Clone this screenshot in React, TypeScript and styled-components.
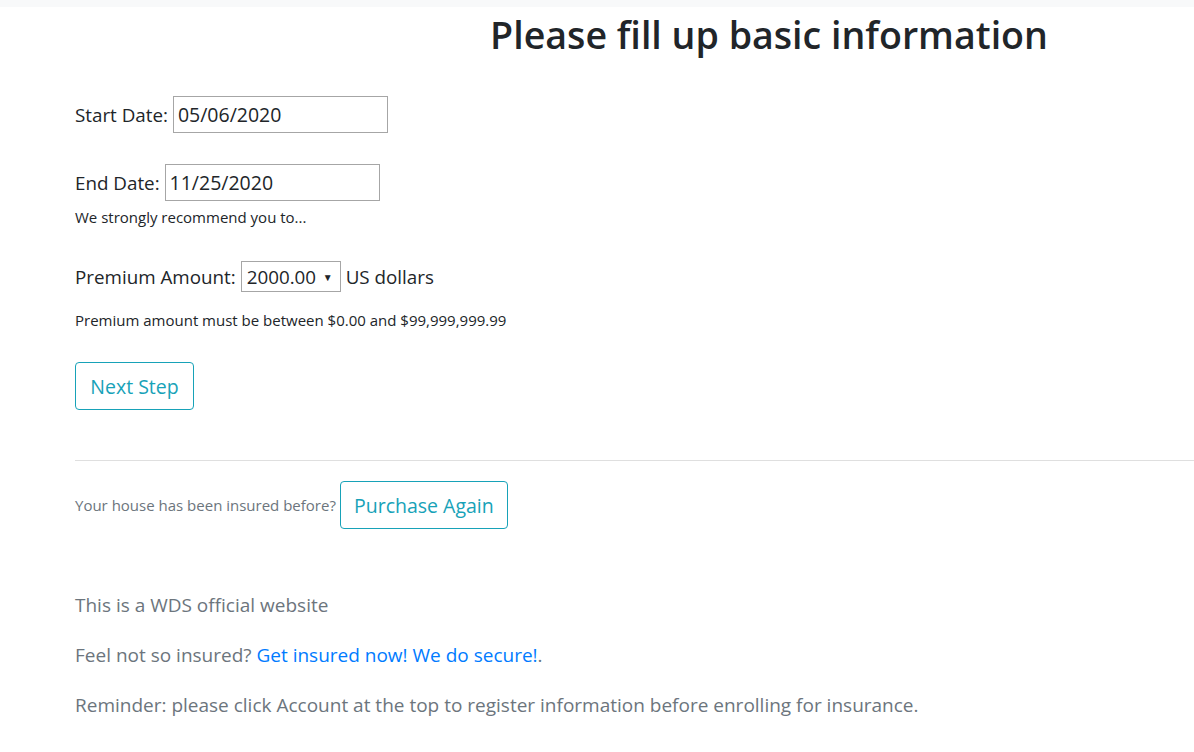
import React from "react";
import styled, { createGlobalStyle } from "styled-components";

const GlobalStyle = createGlobalStyle`
  html, body { margin: 0; padding: 0; background: #fff; }
  body { font-family: "Open Sans", "Noto Sans", sans-serif; color: #212529; }
  * { box-sizing: border-box; }
`;

const TopBar = styled.div`
  height: 7px;
  background: #f8f9fa;
`;

const Page = styled.div`
  display: flex;
  flex-direction: column;
`;

const Title = styled.h1`
  margin: 4px 0 0 0;
  padding-left: 344px;
  text-align: center;
  font-size: 37.6px;
  font-weight: 600;
  line-height: 48px;
  color: #212529;
`;

const Form = styled.div`
  display: flex;
  flex-direction: column;
  padding-left: 75px;
`;

const Row = styled.div<{ $mt: number }>`
  display: flex;
  align-items: center;
  gap: 5px;
  margin-top: ${(p) => p.$mt}px;
  font-size: 18.8px;
  line-height: 24px;
`;

const DateInput = styled.input`
  width: 215px;
  height: 37px;
  border: 1px solid #a6a6a6;
  padding: 0 4px;
  font-family: "Open Sans", sans-serif;
  font-size: 19.5px;
  color: #212529;
  background: #fff;
  outline: none;
`;

const Hint = styled.div<{ $mt: number }>`
  margin-top: ${(p) => p.$mt}px;
  font-size: 15px;
  line-height: 20px;
`;

const SelectBox = styled.div`
  display: flex;
  align-items: center;
  justify-content: space-between;
  width: 100px;
  height: 31px;
  border: 1px solid #a6a6a6;
  padding: 0 7px 0 5px;
  font-size: 18.8px;
  background: #fff;
`;

const Caret = styled.span`
  font-size: 10px;
  line-height: 1;
`;

const OutlineButton = styled.button<{ $w: number }>`
  width: ${(p) => p.$w}px;
  height: 48px;
  border: 1px solid #17a2b8;
  border-radius: 4px;
  background: #fff;
  color: #17a2b8;
  font-family: "Open Sans", sans-serif;
  font-size: 19.5px;
  padding: 0;
  cursor: pointer;
`;

const ButtonWrap = styled.div`
  margin-top: 32px;
`;

const Divider = styled.hr`
  margin: 50px 0 0 75px;
  border: 0;
  border-top: 1px solid #dfdfdf;
  height: 0;
`;

const AgainRow = styled.div`
  display: flex;
  align-items: center;
  gap: 4px;
  padding-left: 75px;
  margin-top: 20px;
  font-size: 15px;
  color: #6c757d;
`;

const Footer = styled.div`
  display: flex;
  flex-direction: column;
  gap: 26px;
  padding-left: 75px;
  margin-top: 64px;
  color: #6c757d;
  font-size: 19px;
  line-height: 24px;
`;

const Link = styled.a`
  color: #007bff;
  text-decoration: none;
`;

export default function App() {
  return (
    <Page>
      <GlobalStyle />
      <TopBar />
      <Title>Please fill up basic information</Title>
      <Form>
        <Row $mt={37}>
          <span>Start Date:</span>
          <DateInput defaultValue="05/06/2020" />
        </Row>
        <Row $mt={31}>
          <span>End Date:</span>
          <DateInput defaultValue="11/25/2020" />
        </Row>
        <Hint $mt={6}>We strongly recommend you to...</Hint>
        <Row $mt={34}>
          <span>Premium Amount:</span>
          <SelectBox>
            <span>2000.00</span>
            <Caret>▼</Caret>
          </SelectBox>
          <span>US dollars</span>
        </Row>
        <Hint $mt={18}>Premium amount must be between $0.00 and $99,999,999.99</Hint>
        <ButtonWrap>
          <OutlineButton $w={119}>Next Step</OutlineButton>
        </ButtonWrap>
      </Form>
      <Divider />
      <AgainRow>
        <span>Your house has been insured before?</span>
        <OutlineButton $w={168}>Purchase Again</OutlineButton>
      </AgainRow>
      <Footer>
        <div>This is a WDS official website</div>
        <div>
          Feel not so insured? <Link href="#">Get insured now! We do secure!</Link>.
        </div>
        <div>Reminder: please click Account at the top to register information before enrolling for insurance.</div>
      </Footer>
    </Page>
  );
}
